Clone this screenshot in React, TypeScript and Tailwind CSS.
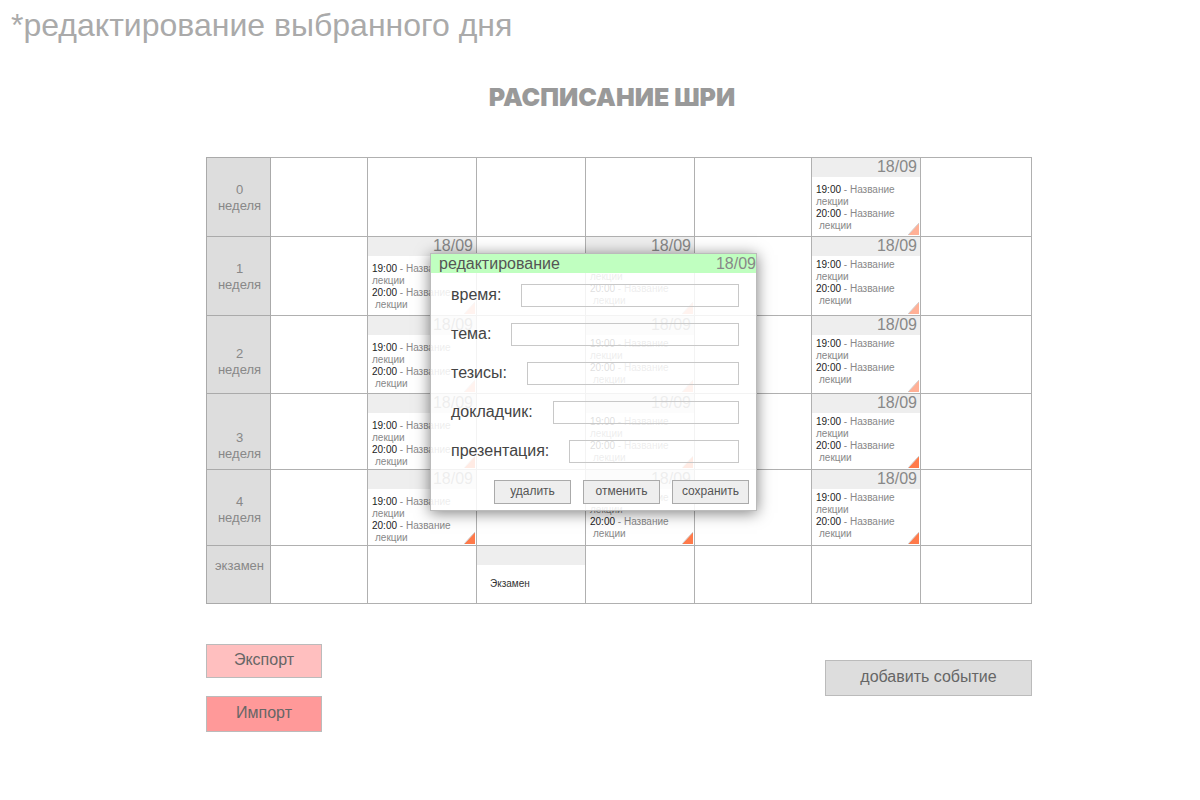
import React from "react";

type Cell = { date: string; roomy?: boolean } | "exam" | null;

type Week = {
  label: string[];
  height: string;
  labelPad: string;
  marker: string;
  cells: Cell[];
};

const roomy: Cell = { date: "18/09", roomy: true };
const snug: Cell = { date: "18/09" };

const weeks: Week[] = [
  { label: ["0", "неделя"], height: "h-[79px]", labelPad: "pt-6", marker: "text-[#ffb096]", cells: [null, null, null, null, null, roomy, null] },
  { label: ["1", "неделя"], height: "h-[79px]", labelPad: "pt-6", marker: "text-[#ffb096]", cells: [null, roomy, null, snug, null, snug, null] },
  { label: ["2", "неделя"], height: "h-[78px]", labelPad: "pt-[30px]", marker: "text-[#ffb096]", cells: [null, roomy, null, snug, null, snug, null] },
  { label: ["3", "неделя"], height: "h-[76px]", labelPad: "pt-9", marker: "text-[#ff7a4a]", cells: [null, roomy, null, snug, null, snug, null] },
  { label: ["4", "неделя"], height: "h-[76px]", labelPad: "pt-6", marker: "text-[#ff7a4a]", cells: [null, roomy, null, snug, null, snug, null] },
  { label: ["экзамен"], height: "h-[58px]", labelPad: "pt-3", marker: "", cells: [null, null, "exam", null, null, null, null] },
];

const columns = ["w-[64px]", "w-[97px]", "w-[109px]", "w-[109px]", "w-[109px]", "w-[117px]", "w-[109px]", "w-[111px]"];

const fields = [
  { id: "time", label: "время:" },
  { id: "topic", label: "тема:" },
  { id: "theses", label: "тезисы:" },
  { id: "speaker", label: "докладчик:" },
  { id: "slides", label: "презентация:" },
];

function DayEvents({ date, pad, marker }: { date: string; pad: string; marker: string }) {
  return (
    <>
      <div className="h-[19px] bg-[#eeeeee] pr-[3px] text-right text-base leading-[18px] text-[#888888]">{date}</div>
      <div className={`pl-1 text-[10px] leading-3 text-[#888888] ${pad}`}>
        <p>
          <span className="text-[#222222]">19:00</span> - Название
        </p>
        <p>лекции</p>
        <p>
          <span className="text-[#222222]">20:00</span> - Название
        </p>
        <p className="pl-[3px]">лекции</p>
      </div>
      <svg className={`absolute right-px bottom-px h-3 w-[11px] ${marker}`} viewBox="0 0 11 12" aria-hidden="true">
        <path d="M0 12 L11 0 V12 Z" fill="currentColor" />
        <path d="M0 12 L11 0" stroke="#d0d0d0" fill="none" />
      </svg>
    </>
  );
}

function Schedule() {
  return (
    <table className="w-full table-fixed border-collapse border border-[#aaaaaa]">
      <colgroup>
        {columns.map((w, i) => (
          <col key={i} className={w} />
        ))}
      </colgroup>
      <tbody>
        {weeks.map((week) => (
          <tr key={week.label.join(" ")} className={week.height}>
            <th scope="row" className={`border border-[#aaaaaa] bg-[#dddddd] pr-0 pl-0.5 align-top text-[13px] leading-4 font-normal text-[#888888] ${week.labelPad}`}>
              {week.label.map((line) => (
                <div key={line}>{line}</div>
              ))}
            </th>
            {week.cells.map((cell, i) => (
              <td key={i} className="relative border border-[#b0b0b0] p-0 align-top">
                {cell === "exam" ? (
                  <>
                    <div className="h-[19px] bg-[#eeeeee]" />
                    <p className="pt-[13px] pl-[13px] text-[10px] leading-3 text-[#333333]">Экзамен</p>
                  </>
                ) : cell ? (
                  <DayEvents date={cell.date} pad={cell.roomy ? "pt-[7px]" : "pt-[3px]"} marker={week.marker} />
                ) : null}
              </td>
            ))}
          </tr>
        ))}
      </tbody>
    </table>
  );
}

function EditDialog() {
  const button = "h-6 w-[77px] border border-[#aaaaaa] bg-[#eeeeee] pb-0.5 text-xs text-[#555555]";
  return (
    <form
      role="dialog"
      aria-labelledby="dialog-title"
      className="absolute top-24 left-56 w-[327px] border border-[#bbbbbb] bg-white/85 shadow-[0_2px_14px_rgba(0,0,0,0.5)]"
      onSubmit={(e) => e.preventDefault()}
    >
      <div className="flex h-[19px] justify-between bg-[#c0ffc0] pl-2 text-base leading-5">
        <h2 id="dialog-title" className="text-[#555555]">редактирование</h2>
        <span className="text-[#888888]">18/09</span>
      </div>
      <div className="flex flex-col gap-4 pt-[11px] pr-[17px] pl-5">
        {fields.map((f) => (
          <div key={f.id} className="flex items-start gap-5">
            <label htmlFor={f.id} className="text-base leading-[22px] text-[#444444]">{f.label}</label>
            <input id={f.id} type="text" className="h-[23px] min-w-0 flex-1 border border-[#c8c8c8] bg-transparent px-1 text-sm" />
          </div>
        ))}
      </div>
      <div className="flex justify-end gap-3 pt-[17px] pr-[7px] pb-1.5">
        <button type="button" className={button}>удалить</button>
        <button type="button" className={button}>отменить</button>
        <button type="submit" className={button}>сохранить</button>
      </div>
    </form>
  );
}

export default function App() {
  const action = "border border-[#bbbbbb] pb-0.5 text-base text-[#666666]";
  return (
    <div className="bg-white font-['Liberation_Sans',Arial,sans-serif]">
      <p className="pt-[7px] pl-[11px] text-[32px] leading-9 text-[#aaaaaa]">*редактирование выбранного дня</p>
      <h1 className="pt-[38px] pl-6 text-center font-[Inter,sans-serif] text-[25px] leading-8 font-black text-[#999999]">РАСПИСАНИЕ ШРИ</h1>
      <main className="pt-11 pr-[168px] pl-[206px]">
        <div className="relative">
          <Schedule />
          <EditDialog />
        </div>
        <div className="flex items-start justify-between pt-10">
          <div className="flex w-[116px] flex-col gap-[18px]">
            <button type="button" className={`h-[34px] bg-[#ffbfbf] ${action}`}>Экспорт</button>
            <button type="button" className={`h-9 bg-[#ff9999] ${action}`}>Импорт</button>
          </div>
          <button type="button" className={`mt-4 h-9 w-[207px] bg-[#dddddd] ${action}`}>добавить событие</button>
        </div>
      </main>
    </div>
  );
}
